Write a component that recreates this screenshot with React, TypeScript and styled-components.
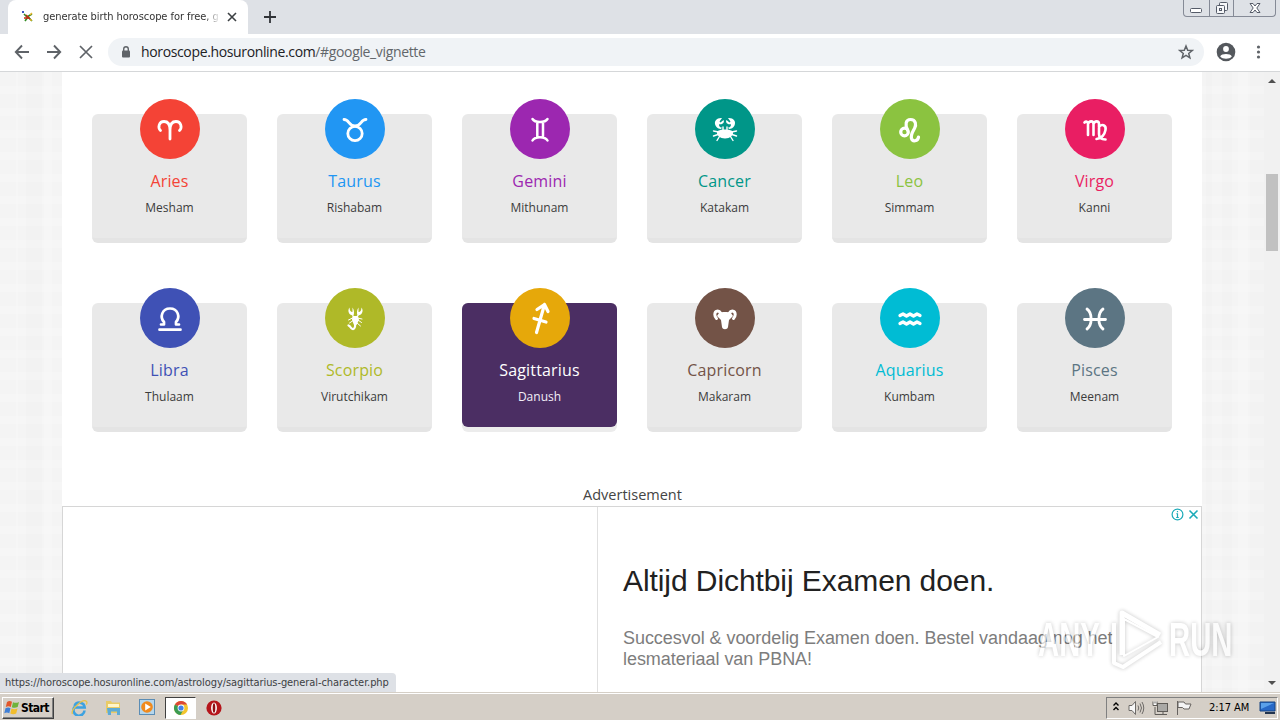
import React from 'react';
import styled, { createGlobalStyle } from 'styled-components';

const GlobalStyle = createGlobalStyle`
	* {
		box-sizing: border-box;
	}

	body {
		margin: 0;
		overflow: hidden;
		font-family: 'Open Sans', sans-serif;
	}

	svg {
		display: block;
		flex: none;
	}
`;

const Screen = styled.div`
	position: relative;
	width: 1280px;
	height: 720px;
	display: flex;
	flex-direction: column;
	overflow: hidden;
	background: white;
`;

const TabStrip = styled.div`
	height: 34px;
	flex: none;
	display: flex;
	align-items: flex-start;
	padding-left: 8px;
	background: #dee1e6;
`;

const Tab = styled.div`
	width: 240px;
	height: 34px;
	display: flex;
	align-items: center;
	padding: 0 10px 0 13px;
	border-radius: 8px 8px 0 0;
	background: white;
`;

const TabTitle = styled.div`
	width: 176px;
	margin: 0 8px 0 8px;
	overflow: hidden;
	white-space: nowrap;
	font: 11px/16px 'DejaVu Sans Condensed', sans-serif;
	letter-spacing: -0.05px;
	color: #333;
	mask-image: linear-gradient(to right, black 162px, rgba(0, 0, 0, 0.15) 175px);
`;

const NewTab = styled.div`
	padding: 11px 0 0 16px;
	flex: 1;
`;

const WindowButtons = styled.div`
	width: 93px;
	height: 17px;
	margin-right: 4px;
	display: flex;
	border: 1px solid #858a96;
	border-top: 0;
	border-radius: 0 0 4px 4px;
`;

const WindowButton = styled.div<{ $width: number }>`
	width: ${(props) => props.$width}px;
	display: flex;
	align-items: center;
	justify-content: center;

	& + & {
		border-left: 1px solid #858a96;
	}
`;

const Toolbar = styled.div`
	height: 38px;
	flex: none;
	display: flex;
	align-items: center;
	padding: 0 12px 1px 14px;
	border-bottom: 1px solid #d5d7d9;
	background: white;
`;

const NavButtons = styled.div`
	width: 94px;
	display: flex;
	gap: 16px;
`;

const AddressBar = styled.div`
	width: 1096px;
	height: 28px;
	display: flex;
	align-items: center;
	padding: 0 10px 0 12px;
	border-radius: 14px;
	background: #f0f3f6;
`;

const Url = styled.div`
	flex: 1;
	margin-left: 9px;
	font: 14px/20px 'Open Sans', sans-serif;
	letter-spacing: -0.36px;
	color: #62666a;

	b {
		font-weight: 400;
		color: #202124;
	}
`;

const ToolbarEnd = styled.div`
	display: flex;
	align-items: center;
	gap: 13px;
	margin-left: 12px;
`;

const Viewport = styled.div`
	height: 620px;
	flex: none;
	display: flex;
	overflow: hidden;
	background-color: #f2f2f2;
	background-image: linear-gradient(90deg, transparent 60%, rgba(255, 255, 255, 0.14) 60%),
		linear-gradient(transparent 65%, rgba(255, 255, 255, 0.14) 65%),
		linear-gradient(90deg, rgba(255, 255, 255, 0.12) 40%, transparent 40%);
	background-size: 26px 26px, 34px 22px, 44px 44px;
`;

const Page = styled.main`
	width: 1140px;
	margin-left: 62px;
	display: flex;
	flex-direction: column;
	background: white;
`;

const SignGrid = styled.div`
	display: grid;
	grid-template-columns: repeat(6, 155px);
	gap: 60px 30px;
	padding: 42px 30px 0;
`;

const Card = styled.div<{ $active?: boolean }>`
	height: 129px;
	display: flex;
	flex-direction: column;
	align-items: center;
	border-radius: 6px;
	border-bottom: 5px solid ${(props) => (props.$active ? '#ececec' : '#e4e4e4')};
	background: #e9e9e9;
`;

const CardFace = styled.div<{ $active?: boolean }>`
	width: 155px;
	height: 124px;
	flex: none;
	display: flex;
	flex-direction: column;
	align-items: center;
	border-radius: 6px;
	background: ${(props) => (props.$active ? '#4b2e63' : 'transparent')};
`;

const Disc = styled.div<{ $color: string }>`
	width: 60px;
	height: 60px;
	flex: none;
	margin-top: -15px;
	border-radius: 50%;
	background: ${(props) => props.$color};
`;

const SignName = styled.div<{ $color: string }>`
	margin-top: 10px;
	font-size: 16px;
	line-height: 24px;
	letter-spacing: 0.16px;
	color: ${(props) => props.$color};
`;

const SignAlias = styled.div<{ $active?: boolean }>`
	margin-top: 6px;
	font-size: 12px;
	line-height: 18px;
	color: ${(props) => (props.$active ? '#f3eef7' : '#3c3c3c')};
`;

const AdLabel = styled.div`
	margin-top: 52px;
	padding-left: 1px;
	text-align: center;
	font-size: 14.5px;
	line-height: 22px;
	color: #444;
`;

const Ad = styled.div`
	flex: 1;
	display: flex;
	border: 1px solid #d6d6d6;
	border-bottom: 0;
`;

const AdImage = styled.div`
	width: 535px;
	border-right: 1px solid #e0e0e0;
`;

const AdBody = styled.div`
	flex: 1;
	display: flex;
	flex-direction: column;
	padding-left: 25px;
	font-family: 'Liberation Sans', sans-serif;
`;

const AdChoices = styled.div`
	display: flex;
	justify-content: flex-end;
	gap: 4px;
	padding: 1px 2px 0 0;
`;

const AdTitle = styled.div`
	margin-top: 40px;
	font-size: 30px;
	line-height: 40px;
	letter-spacing: -0.08px;
	color: #212121;
`;

const AdText = styled.div`
	width: 520px;
	margin-top: 27px;
	font-size: 18px;
	line-height: 21px;
	letter-spacing: -0.05px;
	color: #7d7d7d;
`;

const Scrollbar = styled.div`
	width: 16px;
	margin-left: auto;
	display: flex;
	flex-direction: column;
	align-items: center;
	justify-content: space-between;
	padding: 7px 1px 7px 0;
	background: #f1f1f1;
`;

const Thumb = styled.div`
	width: 12px;
	height: 77px;
	margin: 91px 0 auto 1px;
	background: #c1c1c1;
`;

const StatusBubble = styled.div`
	position: absolute;
	left: 0;
	top: 673px;
	width: 396px;
	height: 19px;
	padding-left: 5px;
	border-radius: 0 4px 0 0;
	background: #dee1e6;
	font: 11px/20px 'DejaVu Sans Condensed', sans-serif;
	letter-spacing: -0.08px;
	white-space: nowrap;
	color: #3c4043;
`;

const Taskbar = styled.div`
	height: 28px;
	flex: none;
	display: flex;
	align-items: center;
	padding: 3px 2px 1px;
	border-top: 1px solid #d5cfc6;
	box-shadow: inset 0 1px white;
	background: #d5cfc7;
`;

const StartButton = styled.div`
	width: 52px;
	height: 22px;
	display: flex;
	align-items: center;
	padding-left: 1px;
	border: 1px solid;
	border-color: white #404040 #404040 white;
	box-shadow: inset -1px -1px #808080;
	font: bold 12px/18px 'DejaVu Sans Condensed', sans-serif;
	letter-spacing: -0.55px;
	color: black;
`;

const QuickLaunch = styled.div`
	display: flex;
	align-items: center;
	margin-left: 17px;
`;

const LaunchItem = styled.div<{ $open?: boolean }>`
	width: ${(props) => (props.$open ? 31 : 34)}px;
	height: 22px;
	display: flex;
	align-items: center;
	padding-left: ${(props) => (props.$open ? 7 : 0)}px;
	margin-right: ${(props) => (props.$open ? 10 : 0)}px;
	margin-left: ${(props) => (props.$open ? -8 : 0)}px;
	background: ${(props) => (props.$open ? 'white' : 'transparent')};
	border: ${(props) => (props.$open ? '1px solid' : '0')};
	border-color: #404040 white white #404040;
`;

const Tray = styled.div`
	width: 172px;
	height: 22px;
	margin-left: auto;
	display: flex;
	align-items: center;
	gap: 7px;
	padding-left: 5px;
	border: 1px solid;
	border-color: #808080 white white #808080;
`;

const Clock = styled.div`
	width: 42px;
	margin: 0 1px 0 9px;
	white-space: nowrap;
	font: 11px/18px 'DejaVu Sans Condensed', sans-serif;
	letter-spacing: -0.08px;
	color: black;
`;

const Watermark = styled.div`
	position: absolute;
	left: 1038px;
	top: 605px;
	width: 200px;
	height: 70px;
	display: flex;
	align-items: center;
	opacity: 0.65;
	filter: drop-shadow(0 0 2px rgba(0, 0, 0, 0.35));
`;

const WatermarkWord = styled.div`
	width: 66px;
	font: bold 48px/70px 'Liberation Sans', sans-serif;
	color: white;
	transform: scaleX(0.61);
	transform-origin: left;
`;

const stroke = {
	fill: 'none',
	stroke: 'white',
	strokeWidth: 2.8,
	strokeLinecap: 'round' as const,
	strokeLinejoin: 'round' as const,
};

const glyphs: Record<string, React.ReactNode> = {
	Aries: <path {...stroke} d="M20.5 31.5C17.5 28.5 19 22.5 24 22.5C28.5 22.5 30 26 30 31V40M39.5 31.5C42.5 28.5 41 22.5 36 22.5C31.5 22.5 30 26 30 31" />,
	Taurus: (
		<g {...stroke}>
			<circle cx="30" cy="34.5" r="7.2" />
			<path d="M19 20.5C24.5 20.5 23.5 27 30 27S35.5 20.5 41 20.5" />
		</g>
	),
	Gemini: <path {...stroke} strokeWidth="2.5" d="M22.5 20C25 24 35 24 37.5 20M22.5 41.5C25 37 35 37 37.5 41.5M27.3 23V38M33 23V38" />,
	Cancer: (
		<g fill="white">
			<path d="M22 33C23 29.5 37 29.5 38 33C38.5 36.5 35 39.5 30 39.5S21.5 36.5 22 33Z" />
			<path d="M27 19C22 18.5 18.5 22 20.5 26.5C21.5 29 24 30 26 30L27 28.5C24.5 28.5 23.5 26.5 24.5 25C27 26 30 23.5 28.5 21L25.5 23.5L24.5 22.5Z" />
			<path d="M33 19C38 18.5 41.5 22 39.5 26.5C38.5 29 36 30 34 30L33 28.5C35.5 28.5 36.5 26.5 35.5 25C33 26 30 23.5 31.5 21L34.5 23.5L35.5 22.5Z" />
			<path {...stroke} strokeWidth="1.4" d="M23.5 33L18.5 32M23 35.5L18.5 37M24.5 37.5L22 41.5M36.5 33L41.5 32M37 35.5L41.5 37M35.5 37.5L38 41.5M28 31V28M32 31V28" />
		</g>
	),
	Leo: (
		<g {...stroke} strokeWidth="3.2">
			<circle cx="24.5" cy="33" r="3.8" />
			<path d="M27.5 31C25 26 25.5 20.5 30.5 20.5C36 20.5 36.5 26 34.5 29.5C32.5 33 30.5 35.5 31.5 39.5C32.5 43 38 42.5 38.5 38" />
		</g>
	),
	Virgo: <path {...stroke} strokeWidth="2.6" d="M19.5 23.5C21 22 23 22.5 23 25V36M23 25C24 21.5 28.5 21.5 28.5 25V36M28.5 25C29.5 21.5 34 21.5 34 25V35C34 38.5 36.5 40.5 40.5 40.5M34 28C36.5 24.5 41.5 26 40.5 31C39.5 36 36 39.5 31.5 40" />,
	Libra: <path {...stroke} strokeWidth="2.7" d="M21 36.5H24V34C19.5 29 22 20.5 30 20.5S40.5 29 36 34V36.5H39M19.5 41.7H40.5" />,
	Scorpio: (
		<g fill="white">
			<path d="M27.5 28H33L34 32L31.5 37H29L27 32Z" />
			<path {...stroke} strokeWidth="2.2" d="M30 35C30.5 39 29.5 41.5 27.5 41C25 40 26 38.5 23.5 37.5" />
			<path {...stroke} strokeWidth="1" d="M27.5 30L23.5 32M27.5 33L24.5 35M32.5 30L37 31M33 32L36.5 34.5M32 35L35.5 38M28.5 28L26.5 26.5M32 28L34.5 26.5" />
			<path d="M24.5 19.5C22 23 24 27.5 28.5 27.5C29.5 25 29 21.5 27.5 19.5V24C25.5 24 24.5 22 24.5 19.5Z" />
			<path d="M36.5 19.5C39 23 37 27.5 32.5 27.5C31.5 25 32 21.5 33.5 19.5V24C35.5 24 36.5 22 36.5 19.5Z" />
		</g>
	),
	Sagittarius: <path {...stroke} strokeWidth="3.2" d="M26.5 44.5L34.5 16.5M27 21.5L34.5 16.5L38 23.5M24 30.5L36 34" />,
	Capricorn: (
		<g>
			<path fill="white" d="M24 25C27 23.5 33 23.5 36 25L38 28L34 32L33 39C32.5 42 27.5 42 27 39L26 32L22 28Z" />
			<path {...stroke} strokeWidth="3" d="M26 25.5C23.5 21.5 19.8 23 19.8 26.5C19.8 28.5 20.5 29.5 21.5 30.5M34 25.5C36.5 21.5 40.2 23 40.2 26.5C40.2 28.5 39.5 29.5 38.5 30.5" />
		</g>
	),
	Aquarius: <path {...stroke} strokeWidth="3.3" d="M20 27.5L23 26L26.5 28L30 26L33.5 28L37 26L40 27.5M20 35.5L23 34L26.5 36L30 34L33.5 36L37 34L40 35.5" />,
	Pisces: <path {...stroke} d="M22 21C27.5 25 27.5 37 22 41M38 21C32.5 25 32.5 37 38 41M19.5 31.5H40.5" />,
};

const signs = [
	{ name: 'Aries', alias: 'Mesham', color: '#f44336' },
	{ name: 'Taurus', alias: 'Rishabam', color: '#2196f3' },
	{ name: 'Gemini', alias: 'Mithunam', color: '#9c27b0' },
	{ name: 'Cancer', alias: 'Katakam', color: '#009688' },
	{ name: 'Leo', alias: 'Simmam', color: '#8bc340' },
	{ name: 'Virgo', alias: 'Kanni', color: '#e91e63' },
	{ name: 'Libra', alias: 'Thulaam', color: '#3f51b5' },
	{ name: 'Scorpio', alias: 'Virutchikam', color: '#afb928' },
	{ name: 'Sagittarius', alias: 'Danush', color: '#e6a80a', active: true },
	{ name: 'Capricorn', alias: 'Makaram', color: '#735347' },
	{ name: 'Aquarius', alias: 'Kumbam', color: '#00bcd4' },
	{ name: 'Pisces', alias: 'Meenam', color: '#5c7583' },
];

function BrowserTabs() {
	return (
		<TabStrip>
			<Tab>
				<svg width="14" height="14" viewBox="0 0 14 14" fill="none">
					<path d="M3 4l3 3 5-3M4 11l3-4 4 4" stroke="#2f8a20" strokeWidth="1.6" />
					<path d="M5 5l4 4M3 8h5" stroke="#c62912" strokeWidth="1.6" />
					<path d="M1 2h2" stroke="#3b56c0" strokeWidth="2" />
					<path d="M9 5l2-2M9 10h2" stroke="#e8b52d" strokeWidth="1.4" />
				</svg>
				<TabTitle>generate birth horoscope for free, g</TabTitle>
				<svg width="10" height="10" viewBox="0 0 10 10" stroke="#3c4043" strokeWidth="1.6">
					<path d="M1 1l8 8M9 1l-8 8" />
				</svg>
			</Tab>
			<NewTab>
				<svg width="12" height="12" viewBox="0 0 12 12" stroke="#303338" strokeWidth="1.8">
					<path d="M6 0v12M0 6h12" />
				</svg>
			</NewTab>
			<WindowButtons>
				<WindowButton $width={25}>
					<svg width="14" height="16" viewBox="0 0 14 16">
						<rect x="1.5" y="8.5" width="11" height="4" rx="1" fill="white" stroke="#555b68" />
					</svg>
				</WindowButton>
				<WindowButton $width={25}>
					<svg width="14" height="16" viewBox="0 0 14 16" fill="#f6f7f9" stroke="#555b68">
						<rect x="4.5" y="2.5" width="8" height="8" rx="1" />
						<rect x="1.5" y="5.5" width="8" height="8" rx="1" />
						<rect x="4.5" y="8.5" width="2" height="2" />
					</svg>
				</WindowButton>
				<WindowButton $width={42}>
					<svg width="12" height="14" viewBox="0 0 12 14" fill="white" stroke="#555b68">
						<path d="M1 2.5h3l2 2.5 2-2.5h3L7.8 7l3.2 4.5H8L6 9l-2 2.5H1L4.2 7z" />
					</svg>
				</WindowButton>
			</WindowButtons>
		</TabStrip>
	);
}

function BrowserToolbar() {
	return (
		<Toolbar>
			<NavButtons>
				<svg width="16" height="16" viewBox="0 0 16 16" fill="none" stroke="#5f6368" strokeWidth="1.9">
					<path d="M15 8H2M8 1.5L1.8 8 8 14.5" />
				</svg>
				<svg width="16" height="16" viewBox="0 0 16 16" fill="none" stroke="#5f6368" strokeWidth="1.9">
					<path d="M1 8h13M8 1.5L14.2 8 8 14.5" />
				</svg>
				<svg width="16" height="16" viewBox="0 0 16 16" fill="none" stroke="#5f6368" strokeWidth="1.7">
					<path d="M2 2l12 12M14 2L2 14" />
				</svg>
			</NavButtons>
			<AddressBar>
				<svg width="12" height="14" viewBox="0 0 12 14">
					<rect x="2" y="5.5" width="8" height="7" rx="1" fill="#5f6368" />
					<path d="M3.7 6V4a2.3 2.3 0 014.6 0v2" fill="none" stroke="#5f6368" strokeWidth="1.4" />
				</svg>
				<Url>
					<b>horoscope.hosuronline.com</b>/#google_vignette
				</Url>
				<svg width="16" height="16" viewBox="0 0 16 16" fill="none" stroke="#5f6368" strokeWidth="1.5">
					<path d="M8 2l1.7 4.2 4.5.3-3.5 2.9 1.2 4.4L8 11.4l-3.9 2.4 1.2-4.4-3.5-2.9 4.5-.3z" />
				</svg>
			</AddressBar>
			<ToolbarEnd>
				<svg width="20" height="20" viewBox="0 0 20 20">
					<circle cx="10" cy="10" r="9.3" fill="#54585d" />
					<circle cx="10" cy="7" r="2.9" fill="white" />
					<path d="M4.2 14.5C5.5 11.3 14.5 11.3 15.8 14.5C13.5 17.5 6.5 17.5 4.2 14.5Z" fill="white" />
				</svg>
				<svg width="18" height="16" viewBox="0 0 18 16" fill="#5f6368">
					<circle cx="9.5" cy="3" r="1.6" />
					<circle cx="9.5" cy="8" r="1.6" />
					<circle cx="9.5" cy="13" r="1.6" />
				</svg>
			</ToolbarEnd>
		</Toolbar>
	);
}

function AdBanner() {
	return (
		<Ad>
			<AdImage />
			<AdBody>
				<AdChoices>
					<svg width="13" height="13" viewBox="0 0 13 13" fill="none" stroke="#1aaab8" strokeWidth="1.2">
						<circle cx="6.5" cy="6.5" r="5.4" />
						<path d="M6.5 5.5v4M6.5 3v1.3M5.5 5.7h1M5.2 9.5h2.6" />
					</svg>
					<svg width="11" height="13" viewBox="0 0 11 13" stroke="#1aaab8" strokeWidth="1.6">
						<path d="M1.5 2.5l8 8M9.5 2.5l-8 8" />
					</svg>
				</AdChoices>
				<AdTitle>Altijd Dichtbij Examen doen.</AdTitle>
				<AdText>Succesvol &amp; voordelig Examen doen. Bestel vandaag nog het lesmateriaal van PBNA!</AdText>
			</AdBody>
		</Ad>
	);
}

function WindowsTaskbar() {
	return (
		<Taskbar>
			<StartButton>
				<svg width="17" height="16" viewBox="0 0 17 16">
					<path d="M3 2c2-1.5 3.5-1 5-.2L6.8 7C5 6 3.5 6.2 1.8 7z" fill="#e2572b" />
					<path d="M9 2.2c2 1 4 .8 6-.2L13.7 7c-2 1-4 1-5.9.2z" fill="#6fb33c" />
					<path d="M1.5 8.2c2-1 3.5-.9 5 0L5.3 13.2C3.5 12.3 2 12.5.3 13.3z" fill="#3f7fd6" />
					<path d="M7.5 8.5c2 1 4 .9 6 0L12.2 13.5c-2 1-4 1-5.9 0z" fill="#f2bd2b" />
				</svg>
				Start
			</StartButton>
			<QuickLaunch>
				<LaunchItem>
					<svg width="17" height="17" viewBox="0 0 17 17" fill="none">
						<path d="M13.5 11.5A5.5 5.5 0 113.2 8.5h10.5A5.3 5.3 0 003.5 7" stroke="#3da2e0" strokeWidth="2.6" />
						<path d="M1.5 15C-1 11 12-1 15.5 2.5c.8.9.3 2.3-.3 3.2" stroke="#e8c24a" strokeWidth="1.3" />
					</svg>
				</LaunchItem>
				<LaunchItem>
					<svg width="17" height="17" viewBox="0 0 17 17">
						<path d="M1 2h5l1 1.5h8V14H1z" fill="#e9cb66" />
						<path d="M3 5h11v3H3z" fill="#fff5c9" />
						<path d="M2 9h13v7h-3v-3.5H6V16H3z" fill="#5dabd6" />
					</svg>
				</LaunchItem>
				<LaunchItem>
					<svg width="17" height="17" viewBox="0 0 17 17">
						<rect x="0.5" y="0.5" width="15" height="15" fill="#b5d6ec" stroke="#5b8db5" />
						<circle cx="8" cy="8" r="5.8" fill="#f08a1d" />
						<path d="M6.2 4.5l5.6 3.5L6.2 11.5z" fill="white" />
					</svg>
				</LaunchItem>
				<LaunchItem $open>
					<svg width="16" height="16" viewBox="0 0 16 16">
						<circle cx="8" cy="8" r="7" fill="#f3c52e" />
						<path d="M8 8L1.9 4.5A7 7 0 0114.1 4.5H8z" fill="#dd4737" />
						<path d="M8 8L1.9 4.5A7 7 0 007.5 15L10.5 9.5z" fill="#3b9b52" />
						<circle cx="8" cy="8" r="3.4" fill="white" />
						<circle cx="8" cy="8" r="2.6" fill="#4481e8" />
					</svg>
				</LaunchItem>
				<svg width="16" height="16" viewBox="0 0 16 16">
					<circle cx="8" cy="8" r="7.6" fill="#b5151b" />
					<ellipse cx="8" cy="8" rx="2.9" ry="5.6" fill="white" />
					<ellipse cx="8" cy="8" rx="1.3" ry="4.8" fill="#8f0d12" />
				</svg>
			</QuickLaunch>
			<Tray>
				<svg width="8" height="14" viewBox="0 0 8 14" fill="none" stroke="black" strokeWidth="1.4">
					<path d="M1.5 4.5L4 2l2.5 2.5M1.5 9L4 6.5 6.5 9" />
				</svg>
				<svg width="18" height="16" viewBox="0 0 18 16" fill="none" stroke="#6d6a67">
					<path d="M2 5.5h3l3.5-4v13l-3.5-4H2z" fill="#f8f8f8" />
					<path d="M11 5.5q1.5 2.5 0 5M13 3.5q3 4.5 0 9M15 2q3.5 6 0 12" />
				</svg>
				<svg width="17" height="16" viewBox="0 0 17 16" fill="none" stroke="#5f5c58">
					<rect x="5.5" y="3.5" width="10" height="8" fill="#aaa9a6" />
					<path d="M7 14.5h8M11 12v2M3 7v7.5h4" />
					<path d="M1 1.5v4h4v-4M3 1.5v2" fill="white" />
				</svg>
				<svg width="17" height="16" viewBox="0 0 17 16" fill="#f4f4f4" stroke="#66625f">
					<path d="M1.5 1v14M2 2h6l1.5 2H15l-2 5H8L6.5 7.5H2z" />
				</svg>
				<Clock>2:17 AM</Clock>
				<svg width="17" height="14" viewBox="0 0 17 14">
					<path d="M1 1h15v9H1z" fill="#2768c7" stroke="#184580" />
					<path d="M2 2h13L2 8z" fill="#5aa0ea" />
					<path d="M6 11h10v2H6z" fill="#22344e" />
				</svg>
			</Tray>
		</Taskbar>
	);
}

export default function App() {
	return (
		<Screen>
			<GlobalStyle />
			<BrowserTabs />
			<BrowserToolbar />
			<Viewport>
				<Page>
					<SignGrid>
						{signs.map((sign) => (
							<Card key={sign.name} $active={sign.active}>
								<CardFace $active={sign.active}>
									<Disc $color={sign.color}>
										<svg width="60" height="60" viewBox="0 0 60 60">
											{glyphs[sign.name]}
										</svg>
									</Disc>
									<SignName $color={sign.active ? 'white' : sign.color}>{sign.name}</SignName>
									<SignAlias $active={sign.active}>{sign.alias}</SignAlias>
								</CardFace>
							</Card>
						))}
					</SignGrid>
					<AdLabel>Advertisement</AdLabel>
					<AdBanner />
				</Page>
				<Scrollbar>
					<svg width="8" height="4" viewBox="0 0 8 4" fill="#505050">
						<path d="M4 0l4 4H0z" />
					</svg>
					<Thumb />
					<svg width="8" height="4" viewBox="0 0 8 4" fill="#505050">
						<path d="M0 0h8L4 4z" />
					</svg>
				</Scrollbar>
			</Viewport>
			<WindowsTaskbar />
			<StatusBubble>https://horoscope.hosuronline.com/astrology/sagittarius-general-character.php</StatusBubble>
			<Watermark>
				<WatermarkWord>ANY</WatermarkWord>
				<svg width="65" height="70" viewBox="0 0 65 70" fill="none" stroke="white" strokeWidth="5" strokeLinejoin="round">
					<path d="M18 50V8l38 22" />
					<path d="M10 18v40l9 4 38-25" strokeWidth="4" />
					<path d="M20 14v37l34-19z" strokeWidth="2" />
				</svg>
				<WatermarkWord>RUN</WatermarkWord>
			</Watermark>
		</Screen>
	);
}
